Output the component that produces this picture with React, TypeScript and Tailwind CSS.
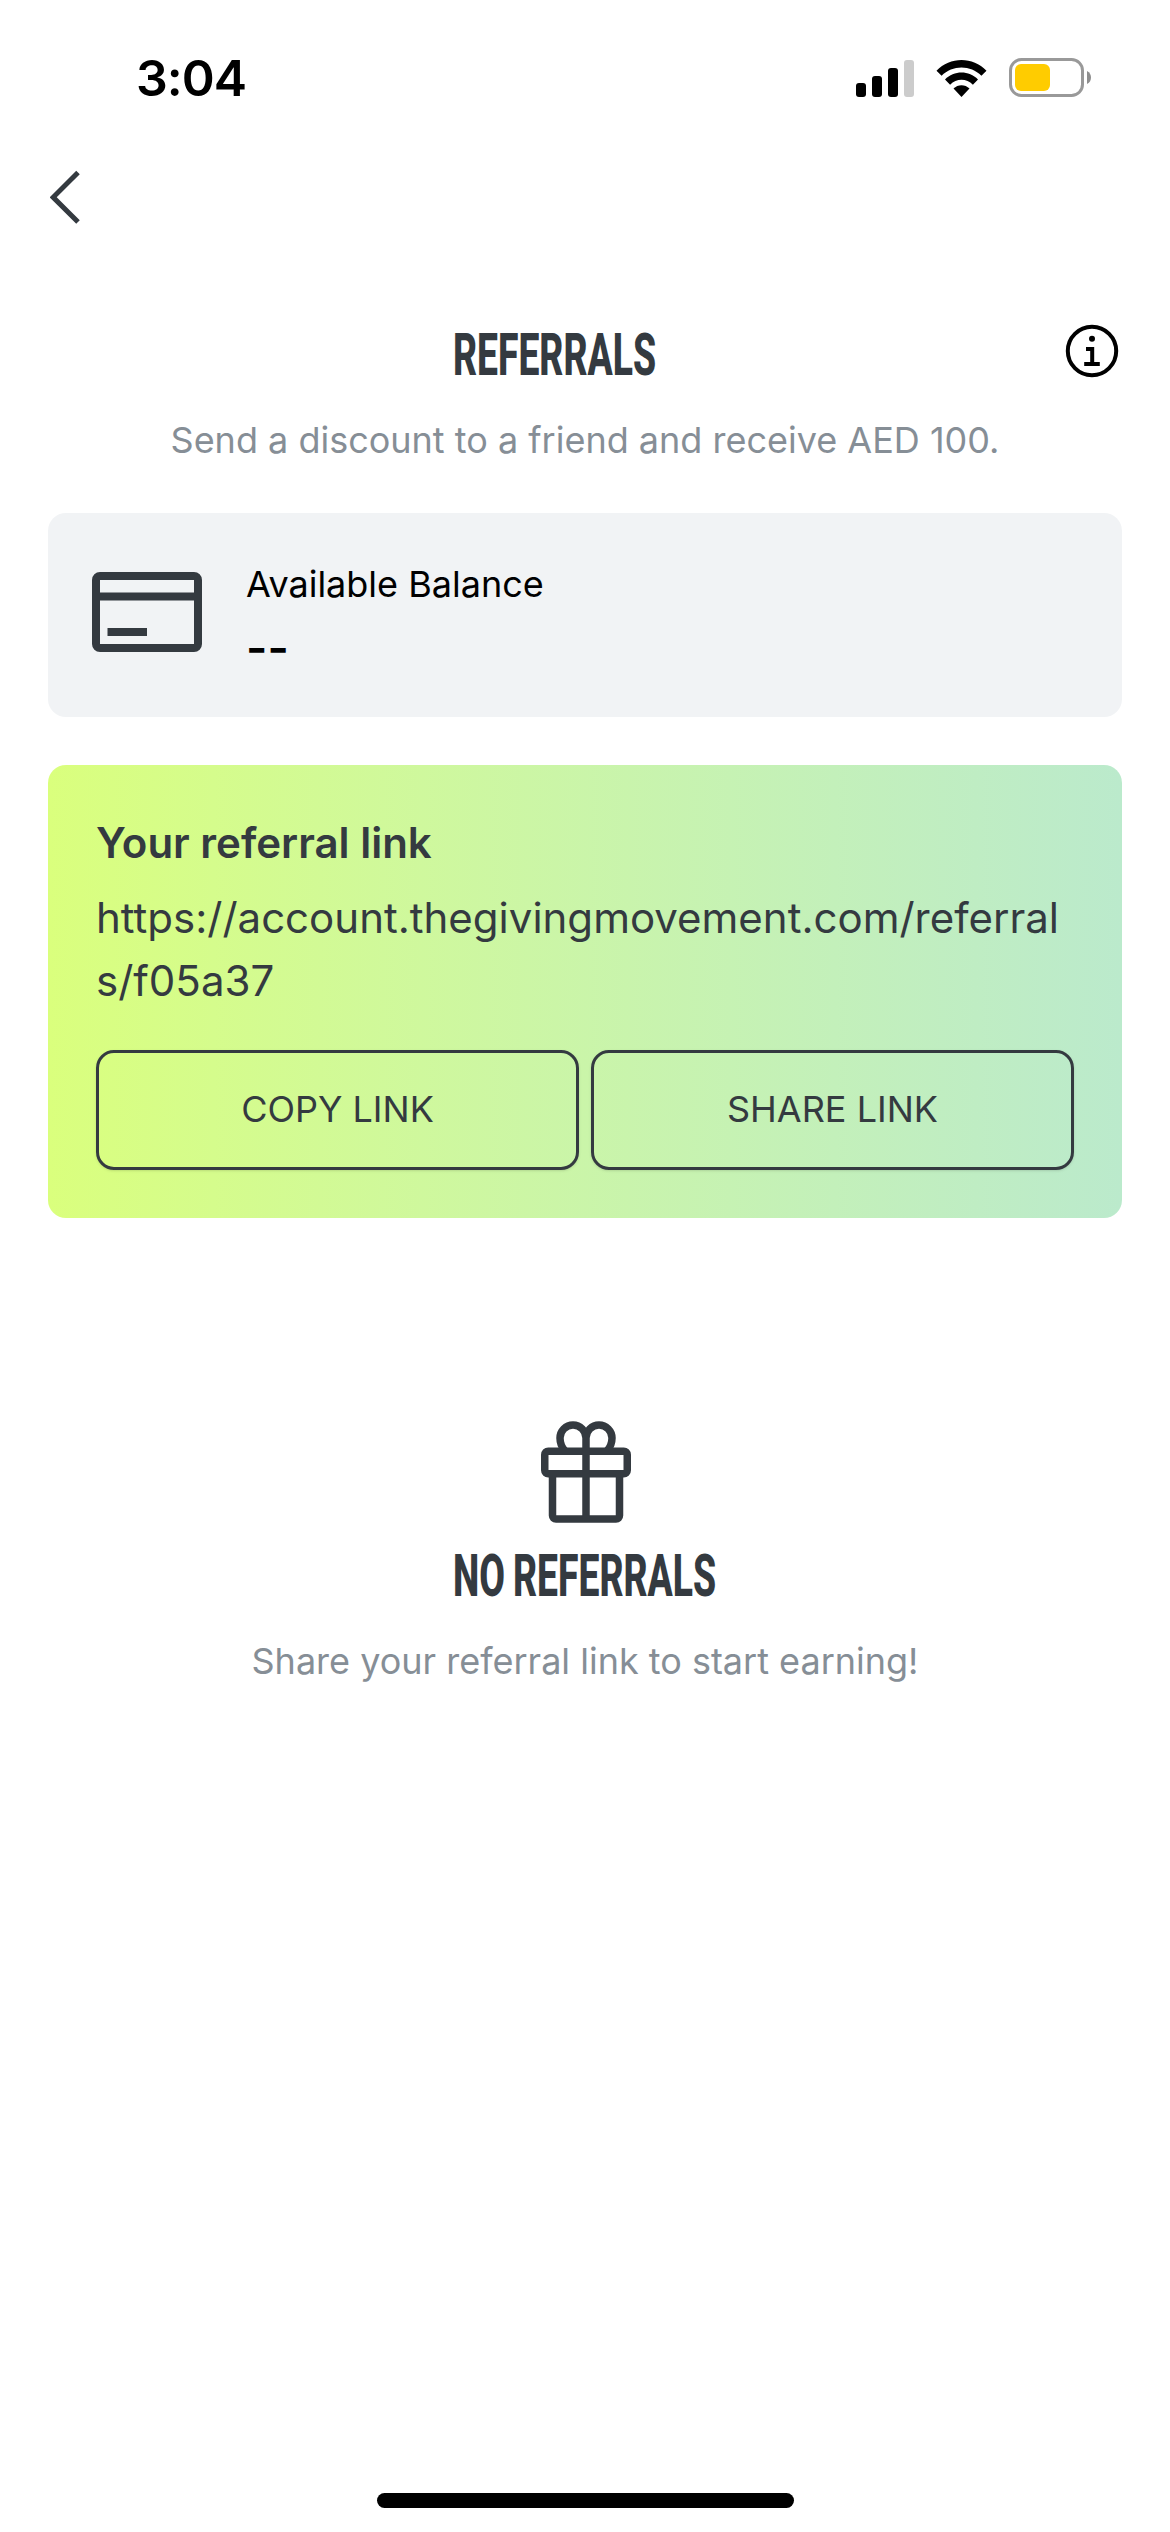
import type { ReactNode } from 'react';

const REFERRAL_URL = 'https://account.thegivingmovement.com/referrals/f05a37';

function StatusBar() {
  return (
    <header className="flex h-[150px] items-start justify-between pt-[48px] pr-[78px] pl-[136px]">
      <span className="text-[50px] leading-[60px] font-semibold tracking-[-1px] text-black">3:04</span>
      <div className="flex items-center pt-[10px]">
        <svg width="58" height="38" viewBox="0 0 58 38">
          <rect x="0" y="24" width="10" height="14" rx="3" />
          <rect x="16" y="17" width="10" height="21" rx="3" />
          <rect x="32" y="9" width="10" height="29" rx="3" />
          <rect x="48" y="1" width="10" height="37" rx="3" fill="#ccc" />
        </svg>
        <svg className="ml-[22px]" width="51" height="38" viewBox="0 0 51 38">
          <path d="M0.5 11.7C14-2.5 37-2.5 50.5 11.7L45.4 16.8C34.5 5.8 16.5 5.8 5.6 16.8Z" />
          <path d="M9 20.5C18 11.2 33 11.2 42 20.5L36.9 25.7C30.6 19.2 20.4 19.2 14.1 25.7Z" />
          <path d="M17.5 29.5C22 25 29 25 33.5 29.5L25.5 38Z" />
        </svg>
        <svg className="ml-[22px]" width="83" height="40" viewBox="0 0 83 40">
          <rect x="1.5" y="1.5" width="72" height="36" rx="11" fill="none" stroke="#999" strokeWidth="3" />
          <rect x="6" y="6" width="35" height="27" rx="6" fill="#ffcc00" />
          <path d="M78 13C81 14.5 82 17 82 19.5S81 24.5 78 26Z" fill="#8e8e8e" />
        </svg>
      </div>
    </header>
  );
}

// condensed display heading
function Heading({ children }: { children: ReactNode }) {
  return (
    <h2 className="w-max origin-left scale-x-[0.632] font-['Roboto',sans-serif] text-[59px] leading-[72px] font-extrabold whitespace-nowrap text-[#343a40] [word-spacing:-2px]">
      {children}
    </h2>
  );
}

function InfoIcon() {
  return (
    <svg width="54" height="54" viewBox="0 0 54 54" fill="none" stroke="#000" strokeWidth="4">
      <circle cx="27" cy="27" r="24.2" />
      <circle cx="27" cy="14.8" r="3" fill="#000" stroke="none" />
      <path d="M21 25H27.2V40M19.2 40H34.8" />
    </svg>
  );
}

function CardIcon() {
  return (
    <svg width="110" height="80" viewBox="0 0 110 80" fill="none" stroke="#343a40" strokeWidth="8">
      <rect x="4" y="4" width="102" height="72" rx="4" />
      <path d="M4 24.5H106M15.5 60H55" />
    </svg>
  );
}

function GiftIcon() {
  return (
    <svg width="90" height="102" viewBox="0 0 90 102" fill="none" stroke="#343a40" strokeWidth="7.5">
      <rect x="3.75" y="30.25" width="82.5" height="22.5" rx="3.5" />
      <path d="M11.5 53V94.5A3.5 3.5 0 0 0 15 98H75A3.5 3.5 0 0 0 78.5 94.5V53" />
      <path d="M45 98V17A13 13 0 0 0 19 17C19 22 20.5 26 24 30M45 17A13 13 0 0 1 71 17C71 22 69.5 26 66 30" />
    </svg>
  );
}

function LinkButton({ label }: { label: string }) {
  return (
    <button className="h-[120px] flex-1 rounded-[18px] border-3 border-[#343a40] pb-[2px] text-[36px] text-[#343a40] shadow-sm">
      {label}
    </button>
  );
}

export default function App() {
  return (
    <div className="flex h-[2532px] w-[1170px] flex-col overflow-hidden bg-white font-['Inter',sans-serif]">
      <StatusBar />

      <nav className="flex h-[150px] items-start pt-[20px] pl-[50px]">
        <svg width="32" height="55" viewBox="0 0 32 55" fill="none" stroke="#343a40" strokeWidth="5">
          <path d="M28 2.5L3.2 27.3L28 52.1" />
        </svg>
      </nav>

      <main className="flex flex-col px-12">
        <div className="mt-[18px] flex h-[72px] items-start justify-between pr-[3px] pl-[405px]">
          <div className="pt-px">
            <Heading>REFERRALS</Heading>
          </div>
          <div className="pt-[6px]">
            <InfoIcon />
          </div>
        </div>
        <p className="mt-[23px] text-center text-[36px] leading-[54px] text-[#868e96]">
          Send a discount to a friend and receive AED 100.
        </p>

        <section className="mt-[46px] flex h-[204px] items-center rounded-[18px] bg-[#f1f3f5] pl-[44px]">
          <div className="pb-[6px]">
            <CardIcon />
          </div>
          <div className="ml-[44px] flex flex-col text-[36px] leading-[54px] text-black">
            <span>Available Balance</span>
            <span className="mt-[9px] text-[46px] font-semibold">--</span>
          </div>
        </section>

        <section className="mt-12 flex h-[453px] flex-col rounded-[18px] bg-linear-to-r from-[#daff7d] to-[#bbeacc] px-12 pt-[46px] text-[#343a40]">
          <h3 className="text-[42px] leading-[63px] font-semibold">Your referral link</h3>
          <p className="mt-3 text-[42px] leading-[63px] break-all">{REFERRAL_URL}</p>
          <div className="mt-[38px] flex gap-3">
            <LinkButton label="COPY LINK" />
            <LinkButton label="SHARE LINK" />
          </div>
        </section>

        <section className="mt-[203px] flex flex-col">
          <div className="self-center pl-[2px]">
            <GiftIcon />
          </div>
          <div className="mt-[17px] pl-[405px]">
            <Heading>NO REFERRALS</Heading>
          </div>
          <p className="mt-[22px] text-center text-[36px] leading-[54px] text-[#868e96]">
            Share your referral link to start earning!
          </p>
        </section>
      </main>

      <div className="mt-auto mb-6 h-[15px] w-[417px] self-center rounded-full bg-black" />
    </div>
  );
}
